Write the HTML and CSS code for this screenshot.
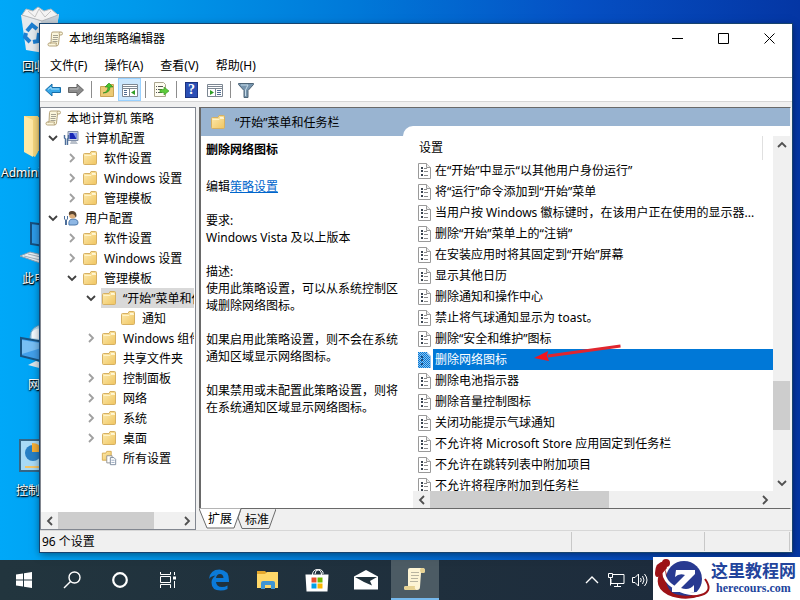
FILE: index.html
```
<!DOCTYPE html>
<html lang="zh-CN">
<head>
  <meta charset="UTF-8">
  <meta name="viewport" content="width=device-width, initial-scale=1.0">
  <title>本地组策略编辑器</title>
  <link rel="stylesheet" href="styles.css">
</head>
<body>

  <!-- Shared icons -->
  <svg class="sprite" aria-hidden="true">
    <defs>
      <linearGradient id="gold" x1="0" y1="0" x2="1" y2="1">
        <stop offset="0" stop-color="#fdebb0"/>
        <stop offset="1" stop-color="#f0c560"/>
      </linearGradient>
    </defs>
    <symbol id="folder" viewBox="0 0 16 16">
      <path d="M1.500 4.500q0-1 1-1H8l1-2h4.500q1 0 1 1v11q0 1-1 1h-11q-1 0-1-1z" fill="url(#gold)" stroke="#d6b062"/>
      <path d="M10 3.500h3.500" stroke="#fff6d8"/>
      <path d="M2.500 5.500H9l1-1h4" fill="none" stroke="#fff3c8"/>
    </symbol>
    <symbol id="scroll" viewBox="0 0 16 16">
      <path d="M4.500 2.500q0-1.500 1.500-1.500h8q1.500 0 1.500 1.500T14 4h-1.500l-1 9q-.3 2-2 2h-7Q1 15 1 13.500T2.500 12H4z" fill="#fbf6dc" stroke="#b5a47c"/>
      <path d="M12.500 4q-1-1.500.5-3M2.500 12h7q-1 2 .5 3" fill="none" stroke="#b5a47c"/>
      <path d="M6 4.500h5M6 6.500h5M5.500 8.500h5M5.500 10.500h5" stroke="#a5a292"/>
    </symbol>
    <symbol id="doc" viewBox="0 0 16 16">
      <path d="M2.500.5h8l4 4v11h-12z" fill="#fff" stroke="#9a9a9a"/>
      <path d="M10.500.5v4h4" fill="#eee" stroke="#9a9a9a"/>
      <path d="M5 4h2v2H5zM5 7h2v2H5zM5 11h2v2H5z" fill="#3a4450"/>
      <path d="M8 5.500h3M8 8.500h4M8 12.500h4" stroke="#8a8a8a"/>
    </symbol>
    <symbol id="doc-selected" viewBox="0 0 16 16">
      <path d="M2 0h9l4 4v12H2z" fill="#8fc1ec"/>
      <path d="M3 1.500h8M3 3.500h9M3 5.500h11M3 7.500h11M3 9.500h11M3 11.500h11M3 13.500h11M3 15.500h11" stroke="#0078d7" stroke-dasharray="1 1"/>
      <path d="M2 .5h9M2 2.500h10M2 4.500h12M2 6.500h12M2 8.500h12M2 10.500h12M2 12.500h12M2 14.500h12" stroke="#0078d7" stroke-dasharray="1 1"/>
      <path d="M5 4h2v2H5zM5 7h2v2H5zM5 11h2v2H5z" fill="#1c4f84"/>
    </symbol>
    <symbol id="computer" viewBox="0 0 16 16">
      <path d="M5 1.500h10v9H5z" fill="#ccd5e3" stroke="#8290a8"/>
      <path d="M6.500 3h7v6h-7z" fill="#1727b5"/>
      <path d="M10 3h3.500v6z" fill="#7f95ef"/>
      <path d="M8 11h5l2 3H7z" fill="#b9c0ca"/>
      <path d="M1.500 5v3l1 1v6M5.500 5v3l-1 1v6" fill="none" stroke="#4d6f9b" stroke-width="1.400"/>
    </symbol>
    <symbol id="user" viewBox="0 0 16 16">
      <path d="M6 15q-1-6 4-6t5 4q0 2-3 2z" fill="#8eb7e4" stroke="#4c78ab"/>
      <circle cx="9.500" cy="5" r="3.500" fill="#dcae7b"/>
      <path d="M6 5Q5 1 9 1t4.500 4q0 2-1 2.500Q12 4 9 4z" fill="#5a4530"/>
      <path d="M1.500 6v3l1 1v5M4.500 6v3l-1 1v5" fill="none" stroke="#4d6f9b"/>
    </symbol>
    <symbol id="folder-docs" viewBox="0 0 18 18">
      <path d="M1.500 3.500h4l1-2h5v10h-10z" fill="url(#gold)" stroke="#d3a850"/>
      <path d="M6.500 6.500h6v8h-6z" fill="#fff" stroke="#8c8c8c"/>
      <path d="M10.500 8.500h4l2 2v6h-6z" fill="#fff" stroke="#75859b"/>
      <path d="M12 11.500h1M14 11.500h1M12 14h1M14 14h1" stroke="#41608c"/>
    </symbol>
    <symbol id="chev-right" viewBox="0 0 16 16">
      <path d="M6 4l4 4-4 4" fill="none" stroke="currentColor" stroke-width="1.800"/>
    </symbol>
    <symbol id="chev-down" viewBox="0 0 16 16">
      <path d="M4 6l4 4 4-4" fill="none" stroke="currentColor" stroke-width="1.800"/>
    </symbol>
    <symbol id="chev-left" viewBox="0 0 16 16">
      <path d="M10 4L6 8l4 4" fill="none" stroke="currentColor" stroke-width="1.800"/>
    </symbol>
    <symbol id="chev-up" viewBox="0 0 16 16">
      <path d="M4 10l4-4 4 4" fill="none" stroke="currentColor" stroke-width="1.800"/>
    </symbol>
  </svg>

  <main class="desktop">

    <!-- Desktop shortcuts -->
    <div class="shortcuts">
      <div class="shortcut">
        <svg viewBox="0 0 48 48">
          <path d="M5 9l38-1-6 37-9 2-18-3z" fill="#e4e9ed"/>
          <path d="M5 9l20 4 18-5-6 37-9 2-3-32z" fill="#c7d0d8"/>
          <path d="M6 9l4-6 7 2 5-4 6 4 7-2 7 6-16 6z" fill="#f4f4f4" stroke="#b6b9bc"/>
          <path d="M12 5l7 6 4-8 6 8 6-6" fill="none" stroke="#c4c4c4"/>
          <path d="M11 25l5-6 5 4M23 27l-1 8-5 1M14 36l-5-5 1-4" fill="none" stroke="#1c7fd2" stroke-width="4"/>
        </svg>
        <span>回收站</span>
      </div>
      <div class="shortcut">
        <svg viewBox="0 0 48 48">
          <path d="M8 4h14v36l-3 5L8 39z" fill="#f5d77e"/>
          <path d="M8 4l9 4v37l-9-5z" fill="#ffe9a6"/>
          <path d="M22 5h17v34H22z" fill="#edc867"/>
          <circle cx="33" cy="26" r="9" fill="#497a6a"/>
        </svg>
        <span>Administrator</span>
      </div>
      <div class="shortcut">
        <svg viewBox="0 0 48 48">
          <path d="M15 5l31 4v22l-31-5z" fill="#2d9be8" stroke="#174f7d" stroke-width="2"/>
          <path d="M4 38l10-4 24 6-11 6z" fill="#e9eef2" stroke="#8ba0b0"/>
          <path d="M8 38l20 5M12 36l21 5" stroke="#9fb0bd"/>
        </svg>
        <span>此电脑</span>
      </div>
      <div class="shortcut">
        <svg viewBox="0 0 48 48">
          <circle cx="26" cy="13" r="12" fill="#b9dcf0" stroke="#639fc2"/>
          <path d="M16 8q7-7 11 0l-4 7-7-1z" fill="#f2faff"/>
          <path d="M5 14l36 6v21L5 32z" fill="#429fea" stroke="#175483" stroke-width="2"/>
          <path d="M6 16l29 5L6 30z" fill="#78bff4"/>
          <path d="M12 41l8-4 15 5-8 3z" fill="#dce5eb"/>
        </svg>
        <span>网络</span>
      </div>
      <div class="shortcut">
        <svg viewBox="0 0 48 48">
          <path d="M4 10h40v31H4z" fill="#a8daf6" stroke="#356686" stroke-width="2"/>
          <circle cx="17" cy="23" r="8" fill="#267fc5"/>
          <path d="M16 22V13q9 0 10 9z" fill="#f4ae35"/>
          <path d="M9 37h18" stroke="#f3c467" stroke-width="2"/>
        </svg>
        <span>控制面板</span>
      </div>
    </div>

    <!-- Group policy editor -->
    <section class="window">
      <header class="titlebar">
        <svg class="icon"><use href="#scroll"/></svg>
        <h1>本地组策略编辑器</h1>
        <div class="window-buttons">
          <button aria-label="最小化"><svg viewBox="0 0 11 11"><path d="M0 5.500h11"/></svg></button>
          <button aria-label="最大化"><svg viewBox="0 0 11 11"><path d="M.5.5h10v10H.5z"/></svg></button>
          <button aria-label="关闭"><svg viewBox="0 0 11 11"><path d="M.5.5l10 10M10.500.5l-10 10"/></svg></button>
        </div>
      </header>

      <nav class="menubar">
        <button>文件(F)</button>
        <button>操作(A)</button>
        <button>查看(V)</button>
        <button>帮助(H)</button>
      </nav>

      <div class="toolbar">
        <button aria-label="后退">
          <svg class="icon" viewBox="0 0 16 16"><path d="M.5 8L7 2v3.500h8.500v5H7V14z" fill="#38a8e8" stroke="#176da8"/><path d="M3 7.500L6 5v2h8" fill="none" stroke="#a7ddf9"/></svg>
        </button>
        <button aria-label="前进">
          <svg class="icon" viewBox="0 0 16 16"><path d="M15.500 8L9 2v3.500H.5v5H9V14z" fill="#8b8b8b" stroke="#666"/><path d="M2 7h8V5" fill="none" stroke="#b9b9b9"/></svg>
        </button>
        <i class="sep"></i>
        <button aria-label="上一级">
          <svg class="icon" viewBox="0 0 16 16"><path d="M1.500 4.500h6l1-2h6v12h-13z" fill="#ecca75" stroke="#c9a456"/><path d="M4 11q5-1 5-6H6l4-4 4 4h-3q0 6-7 6z" fill="#45c62c" stroke="#267d1b" stroke-width=".6"/></svg>
        </button>
        <button class="pressed" aria-label="显示/隐藏控制台树">
          <svg class="icon" viewBox="0 0 16 16"><path d="M.5 2.500h15v12H.5z" fill="#fff" stroke="#7d8793"/><path d="M1 4.500h14M1 6.500h14M7.500 7v8" stroke="#7d8793"/><path d="M2 8.500h3M2 10.500h3M2 12.500h3" stroke="#506c91"/><path d="M13 8v5l-4-2.500z" fill="#2f9f27"/></svg>
        </button>
        <i class="sep"></i>
        <button aria-label="导出列表">
          <svg class="icon" viewBox="0 0 16 16"><path d="M1.500.5h9l2 2v12h-11z" fill="#fffdf0" stroke="#aaa58e"/><path d="M3 4.500h1M3 7.500h1M3 10.500h1M5 4.500h5M5 7.500h4M5 10.500h4" stroke="#555"/><path d="M7 7.500h4V5l5 4-5 4v-2.500H7z" fill="#5ccb3a" stroke="#36931f" stroke-width=".6"/></svg>
        </button>
        <i class="sep"></i>
        <button class="help" aria-label="帮助"><span>?</span></button>
        <button aria-label="显示/隐藏操作窗格">
          <svg class="icon" viewBox="0 0 16 16"><path d="M.5 2.500h15v12H.5z" fill="#fff" stroke="#7d8793"/><path d="M1 4.500h14M1 6.500h14M8.500 7v8" stroke="#7d8793"/><path d="M10 8.500h4M10 10.500h4M10 12.500h4" stroke="#506c91"/><path d="M3 8v5l4-2.500z" fill="#2f9f27"/></svg>
        </button>
        <i class="sep"></i>
        <button aria-label="筛选器">
          <svg class="icon" viewBox="0 0 16 16"><path d="M.5 1.500h15v1L10 8.500v7H6v-7L.5 2.500z" fill="#7795ae" stroke="#4e6577"/><path d="M3 3h7L7.500 8v6" fill="none" stroke="#c5dbe9"/></svg>
        </button>
      </div>

      <div class="panes">
        <!-- Console tree -->
        <aside class="tree-pane">
          <div class="tree">
            <div class="node root"><svg class="icon"><use href="#scroll"/></svg><span>本地计算机 策略</span></div>
            <ul>
              <li>
                <div class="node open"><svg class="chev"><use href="#chev-down"/></svg><svg class="icon"><use href="#computer"/></svg><span>计算机配置</span></div>
                <ul>
                  <li class="node"><svg class="chev"><use href="#chev-right"/></svg><svg class="icon"><use href="#folder"/></svg><span>软件设置</span></li>
                  <li class="node"><svg class="chev"><use href="#chev-right"/></svg><svg class="icon"><use href="#folder"/></svg><span>Windows 设置</span></li>
                  <li class="node"><svg class="chev"><use href="#chev-right"/></svg><svg class="icon"><use href="#folder"/></svg><span>管理模板</span></li>
                </ul>
              </li>
              <li>
                <div class="node open"><svg class="chev"><use href="#chev-down"/></svg><svg class="icon"><use href="#user"/></svg><span>用户配置</span></div>
                <ul>
                  <li class="node"><svg class="chev"><use href="#chev-right"/></svg><svg class="icon"><use href="#folder"/></svg><span>软件设置</span></li>
                  <li class="node"><svg class="chev"><use href="#chev-right"/></svg><svg class="icon"><use href="#folder"/></svg><span>Windows 设置</span></li>
                  <li>
                    <div class="node open"><svg class="chev"><use href="#chev-down"/></svg><svg class="icon"><use href="#folder"/></svg><span>管理模板</span></div>
                    <ul>
                      <li>
                        <div class="node open"><svg class="chev"><use href="#chev-down"/></svg><div class="mark"><svg class="icon"><use href="#folder"/></svg><span>“开始”菜单和任务栏</span></div></div>
                        <ul>
                          <li class="node"><i class="chev"></i><svg class="icon"><use href="#folder"/></svg><span>通知</span></li>
                        </ul>
                      </li>
                      <li class="node"><svg class="chev"><use href="#chev-right"/></svg><svg class="icon"><use href="#folder"/></svg><span>Windows 组件</span></li>
                      <li class="node"><i class="chev"></i><svg class="icon"><use href="#folder"/></svg><span>共享文件夹</span></li>
                      <li class="node"><svg class="chev"><use href="#chev-right"/></svg><svg class="icon"><use href="#folder"/></svg><span>控制面板</span></li>
                      <li class="node"><svg class="chev"><use href="#chev-right"/></svg><svg class="icon"><use href="#folder"/></svg><span>网络</span></li>
                      <li class="node"><svg class="chev"><use href="#chev-right"/></svg><svg class="icon"><use href="#folder"/></svg><span>系统</span></li>
                      <li class="node"><svg class="chev"><use href="#chev-right"/></svg><svg class="icon"><use href="#folder"/></svg><span>桌面</span></li>
                      <li class="node"><i class="chev"></i><svg class="icon"><use href="#folder-docs"/></svg><span>所有设置</span></li>
                    </ul>
                  </li>
                </ul>
              </li>
            </ul>
          </div>
          <div class="hscroll">
            <button aria-label="向左滚动"><svg><use href="#chev-left"/></svg></button>
            <div class="track"><div class="thumb thumb-tree"></div></div>
            <button aria-label="向右滚动"><svg><use href="#chev-right"/></svg></button>
          </div>
        </aside>

        <!-- Details -->
        <div class="detail-pane">
          <div class="detail-box">
            <div class="band">
              <div class="band-title"><svg class="icon"><use href="#folder"/></svg><span>“开始”菜单和任务栏</span></div>
              <div class="band-curve"></div>
            </div>
            <div class="detail">
              <div class="description">
                <h2>删除网络图标</h2>
                <p class="edit">编辑<a href="#">策略设置</a></p>
                <p>要求:<br>Windows Vista 及以上版本</p>
                <p>描述:<br>使用此策略设置，可以从系统控制区域删除网络图标。</p>
                <p>如果启用此策略设置，则不会在系统通知区域显示网络图标。</p>
                <p>如果禁用或未配置此策略设置，则将在系统通知区域显示网络图标。</p>
              </div>
              <div class="list-area">
                <div class="list-wrap">
                  <table class="settings">
                    <thead><tr><th>设置</th></tr></thead>
                    <tbody>
                      <tr><td><svg class="icon"><use href="#doc"/></svg><span>在“开始”中显示“以其他用户身份运行”</span></td></tr>
                      <tr><td><svg class="icon"><use href="#doc"/></svg><span>将“运行”命令添加到“开始”菜单</span></td></tr>
                      <tr><td><svg class="icon"><use href="#doc"/></svg><span>当用户按 Windows 徽标键时，在该用户正在使用的显示器...</span></td></tr>
                      <tr><td><svg class="icon"><use href="#doc"/></svg><span>删除“开始”菜单上的“注销”</span></td></tr>
                      <tr><td><svg class="icon"><use href="#doc"/></svg><span>在安装应用时将其固定到“开始”屏幕</span></td></tr>
                      <tr><td><svg class="icon"><use href="#doc"/></svg><span>显示其他日历</span></td></tr>
                      <tr><td><svg class="icon"><use href="#doc"/></svg><span>删除通知和操作中心</span></td></tr>
                      <tr><td><svg class="icon"><use href="#doc"/></svg><span>禁止将气球通知显示为 toast。</span></td></tr>
                      <tr><td><svg class="icon"><use href="#doc"/></svg><span>删除“安全和维护”图标</span></td></tr>
                      <tr class="selected"><td><svg class="icon"><use href="#doc-selected"/></svg><span>删除网络图标</span>
                        <svg class="pointer" viewBox="0 0 90 20"><path d="M88.500 3L16 13" fill="none" stroke="#e0262e" stroke-width="3"/><path d="M2 15l14-7-1 5 2 5z" fill="#f3141e"/></svg>
                      </td></tr>
                      <tr><td><svg class="icon"><use href="#doc"/></svg><span>删除电池指示器</span></td></tr>
                      <tr><td><svg class="icon"><use href="#doc"/></svg><span>删除音量控制图标</span></td></tr>
                      <tr><td><svg class="icon"><use href="#doc"/></svg><span>关闭功能提示气球通知</span></td></tr>
                      <tr><td><svg class="icon"><use href="#doc"/></svg><span>不允许将 Microsoft Store 应用固定到任务栏</span></td></tr>
                      <tr><td><svg class="icon"><use href="#doc"/></svg><span>不允许在跳转列表中附加项目</span></td></tr>
                      <tr><td><svg class="icon"><use href="#doc"/></svg><span>不允许将程序附加到任务栏</span></td></tr>
                    </tbody>
                  </table>
                </div>
                <div class="vscroll">
                  <button aria-label="向上滚动"><svg><use href="#chev-up"/></svg></button>
                  <div class="track"><div class="thumb thumb-list-y"></div></div>
                  <button aria-label="向下滚动"><svg><use href="#chev-down"/></svg></button>
                </div>
                <div class="hscroll">
                  <button aria-label="向左滚动"><svg><use href="#chev-left"/></svg></button>
                  <div class="track"><div class="thumb thumb-list-x"></div></div>
                  <button aria-label="向右滚动"><svg><use href="#chev-right"/></svg></button>
                </div>
                <div class="corner"></div>
              </div>
            </div>
          </div>
          <div class="tabs">
            <button class="tab active">
              <svg viewBox="0 0 42 20"><path d="M0 0l8 19.500h27L42 0" fill="#fff" stroke="#6b6b6b"/></svg>
              <span>扩展</span>
            </button>
            <button class="tab">
              <svg viewBox="0 0 38 20"><path d="M3 0L0 9l4 10.500h27L38 0" fill="#f0f0f0" stroke="#6b6b6b"/></svg>
              <span>标准</span>
            </button>
          </div>
        </div>
      </div>

      <footer class="statusbar">
        <span class="status-main">96 个设置</span>
        <span class="status-mid"></span>
        <span class="status-end"></span>
      </footer>
    </section>
  </main>

  <!-- Taskbar -->
  <footer class="taskbar">
    <button aria-label="开始"><svg viewBox="0 0 24 24"><path d="M4 6.500l7-1v6H4zM12 5.300l8-1.300v7.500h-8zM4 12.500h7v6l-7-1zM12 12.500h8V20l-8-1.300z" fill="#fff"/></svg></button>
    <button aria-label="搜索"><svg viewBox="0 0 24 24"><circle cx="14.500" cy="9.500" r="5.500" fill="none" stroke="#fff" stroke-width="1.400"/><path d="M10.500 13.500L4 20" stroke="#fff" stroke-width="1.400"/></svg></button>
    <button aria-label="Cortana"><svg viewBox="0 0 24 24"><circle cx="12" cy="12" r="6.800" fill="none" stroke="#fff" stroke-width="2.200"/></svg></button>
    <button aria-label="任务视图"><svg viewBox="0 0 24 24"><path d="M4.500 4v2.500h10V4M4.500 20v-3.500h10V20M4.500 8.500h10v6h-10zM18.500 4v3M18.500 13v7" fill="none" stroke="#fff"/><path d="M17 8.500h3v3h-3z" fill="#fff"/></svg></button>
    <div class="apps">
      <button aria-label="Edge"><svg viewBox="0 0 24 24"><path d="M2 11Q3 1.500 12.500 1.500 22 2 22 12.500v1.500H9q.5 5 6 5 3 0 5.500-1.500V21q-3 1.500-7 1.500-9 0-9-8 0-4 4-7-5 .5-6.500 3.500zm7-1h7.500q-.3-4-3.500-4-3.300 0-4 4z" fill="#0b7ad8"/></svg></button>
      <button aria-label="文件资源管理器"><svg viewBox="0 0 24 24"><path d="M1 3h8l2 2h11v15H1z" fill="#e5a82d"/><path d="M1 6h8l2-2h11v16H1z" fill="#ffd869"/><path d="M5 21v-6q0-2 2-2h10q2 0 2 2v6h-4v-4H9v4z" fill="#3f95d3"/></svg></button>
      <button aria-label="应用商店"><svg viewBox="0 0 24 24"><path d="M7.500 7q0-5 4.500-5.500Q16.500 2 16.500 7M10 6q0-4 4-4.500Q18.500 2 18 6" fill="none" stroke="#fff"/><path d="M.5 6.500h23l-1 17h-21z" fill="#fff"/><path d="M6.500 9.500h5v5h-5z" fill="#e74e2c"/><path d="M12.500 9.500h5v5h-5z" fill="#72b800"/><path d="M6.500 15.500h5v5h-5z" fill="#00a1e8"/><path d="M12.500 15.500h5v5h-5z" fill="#fbb600"/></svg></button>
      <button aria-label="邮件"><svg viewBox="0 0 24 24"><path d="M0 8.500L12 2l12 6.500V21.500H0z" fill="#fff"/><path d="M1 9h22l-7 4 2 4.500L10 14z" fill="#21323c"/></svg></button>
      <button class="running" aria-label="本地组策略编辑器"><svg viewBox="0 0 24 24"><path d="M5 3q0-2 2-2h13q2 0 2 2.500T20 6h-2l-1 14q0 3-3 3H3q-2 0-2-2t2-2h2z" fill="#fdf4d4"/><path d="M18 6q-2-3 0-5h2q2 0 2 2.500T20 6zM1 21q0-2 2-2h9q-1 3 2 4H3q-2 0-2-2z" fill="#e7d292"/><path d="M8 5.500h8M8 8.500h8M8 11.500h7M7 14.500h8" stroke="#b9b4a0"/></svg></button>
    </div>
    <div class="tray">
      <button aria-label="显示隐藏的图标"><svg viewBox="0 0 18 18"><path d="M3 12l6-6 6 6" fill="none" stroke="#fff" stroke-width="1.400"/></svg></button>
      <button aria-label="网络"><svg viewBox="0 0 18 18"><path d="M6 3.500h11v9H4V8M1.500 2.500h4v4h-4zM3.500 6.500v8M10.500 12.500v3M7 15.500h7" fill="none" stroke="#fff"/></svg></button>
      <button aria-label="音量"><svg viewBox="0 0 18 18"><path d="M1.500 6.500H4L7.500 3v12L4 11.500H1.500zM9.500 7q1.500 2 0 4M11.500 5q3 4 0 8M13.500 3q5 6 0 12" fill="none" stroke="#fff"/></svg></button>
    </div>
  </footer>

  <!-- Site badge -->
  <div class="badge">
    <svg viewBox="0 0 58 43">
      <path d="M12 8Q-4 28 15 38q17 7 32 1-16 0-27-12Q12 18 12 8z" fill="#9d1217"/>
      <circle cx="31" cy="22" r="18" fill="#283a91"/>
      <path d="M23 13h19v4L28 31q8 3 13-3v7H19v-4l13-13q-6-2-10 2z" fill="#fff"/>
      <path d="M12 8q-5 14 10 23 19 11 33 1" fill="none" stroke="#fff" stroke-width="3"/>
      <path d="M52 22q10 14-8 17-18 3-30-5" fill="none" stroke="#9d1217" stroke-width="2"/>
      <path d="M2 16Q2 5 12 4l2 7-7 8q-5 3-5-3z" fill="#9d1217"/>
      <circle cx="13" cy="6" r="4" fill="#9d1217"/>
    </svg>
    <div class="badge-text">
      <strong>这里教程网</strong>
      <span>herecours.com</span>
    </div>
  </div>

</body>
</html>
```
FILE: styles.css
```
* {
  box-sizing: border-box;
}
body {
  margin: 0;
  height: 100vh;
  display: flex;
  flex-direction: column;
  overflow: hidden;
  font-family: "Noto Sans", "Noto Sans CJK SC", sans-serif;
  font-size: 12px;
  line-height: 17px;
  color: #000;
}
button {
  display: flex;
  align-items: center;
  justify-content: center;
  padding: 0;
  border: 0;
  background: none;
  font: inherit;
  color: inherit;
}
ul {
  margin: 0;
  padding: 0;
  list-style: none;
}
.sprite {
  position: absolute;
  width: 0;
  height: 0;
}
.icon {
  width: 16px;
  height: 16px;
  flex: none;
}

/* Desktop */
.desktop {
  flex: 1;
  min-height: 0;
  display: grid;
  background: linear-gradient(90deg, #00a8f8 0%, #0098ea 18%, #0078d8 45%, #0550c4 72%, #0436a4 100%);
}
.shortcuts {
  grid-area: 1 / 1;
  width: 80px;
  padding-top: 6px;
}
.shortcut {
  height: 106px;
  display: flex;
  flex-direction: column;
  align-items: center;
  gap: 4px;
  color: #fff;
  text-shadow: 0 1px 2px #000, 1px 1px 1px #000;
}
.shortcut svg {
  width: 48px;
  height: 48px;
}
.window {
  grid-area: 1 / 1;
  z-index: 1;
  min-height: 0;
  min-width: 0;
  margin: 24px 8px 8px 40px;
  display: flex;
  flex-direction: column;
  background: #f0f0f0;
  box-shadow: 0 0 0 1px #17436e, 0 2px 8px rgba(0, 0, 0, 0.5);
}

/* Title, menu, toolbar */
.titlebar {
  height: 29px;
  padding-left: 7px;
  display: flex;
  align-items: center;
  gap: 6px;
  background: #fff;
}
.titlebar h1 {
  margin: 0;
  flex: 1;
  font-size: 12px;
  font-weight: normal;
}
.window-buttons {
  display: flex;
}
.window-buttons button {
  width: 46px;
  height: 29px;
}
.window-buttons svg {
  width: 11px;
  height: 11px;
  fill: none;
  stroke: #000;
}
.menubar {
  height: 25px;
  padding-left: 2px;
  display: flex;
  gap: 1px;
  background: #fff;
  border-bottom: 1px solid #a9a9a9;
}
.menubar button {
  padding: 0 8px;
}
.toolbar {
  height: 24px;
  padding-left: 1px;
  display: flex;
  background: #fff;
  border-bottom: 1px solid #d6d6d6;
}
.toolbar button {
  width: 23px;
}
.toolbar .pressed {
  background: #cce8ff;
  border: 1px solid #99d1ff;
}
.sep {
  width: 1px;
  margin: 3px 3px 3px 4px;
  background: #8d8d8d;
}
.help span {
  width: 13px;
  height: 16px;
  background: #2b4fb5;
  border: 1px solid #1b3380;
  color: #fff;
  font: bold 14px/14px "Liberation Serif", serif;
}

/* Panes */
.panes {
  flex: 1;
  min-height: 0;
  padding: 5px 1px 0 0;
  display: flex;
  gap: 3px;
}
.tree-pane {
  width: 156px;
  flex: none;
  display: flex;
  flex-direction: column;
  border: 1px solid #828790;
  background: #fff;
}
.tree {
  flex: 1;
  min-height: 0;
  overflow: hidden;
  margin-right: 1px;
  padding-left: 4px;
}
.tree ul ul {
  padding-left: 19px;
}
.node {
  height: 20px;
  display: flex;
  align-items: center;
  white-space: nowrap;
}
.node .icon {
  margin-right: 6px;
}
.chev {
  width: 16px;
  height: 16px;
  margin-right: 2px;
  flex: none;
  color: #a0a0a0;
}
.open .chev {
  color: #404040;
}
.mark {
  height: 20px;
  display: flex;
  align-items: center;
  background: #d9d9d9;
}

/* Scroll bars */
.hscroll {
  height: 17px;
  display: flex;
  background: #f0f0f0;
}
.vscroll {
  width: 17px;
  display: flex;
  flex-direction: column;
  background: #f0f0f0;
}
.hscroll button, .vscroll button {
  width: 17px;
  height: 17px;
  flex: none;
  color: #505050;
}
.hscroll svg, .vscroll svg {
  width: 16px;
  height: 16px;
}
.track {
  flex: 1;
  display: flex;
}
.vscroll .track {
  flex-direction: column;
  justify-content: flex-end;
}
.thumb {
  background: #cdcdcd;
}
.thumb-tree {
  width: 80%;
}
.thumb-list-x {
  width: 55%;
}
.thumb-list-y {
  height: 49px;
  margin-bottom: 44px;
}

/* Details */
.detail-pane {
  flex: 1;
  min-width: 0;
  display: flex;
  flex-direction: column;
}
.detail-box {
  flex: 1;
  min-height: 0;
  display: flex;
  flex-direction: column;
  border: 1px solid #696969;
  border-left-width: 2px;
  border-right-color: #f0f0f0;
  background: #fff;
}
.band {
  height: 28px;
  flex: none;
  display: flex;
  background: #99b4d1;
}
.band-title {
  width: 202px;
  padding-left: 9px;
  display: flex;
  align-items: center;
  gap: 9px;
}
.band-curve {
  flex: 1;
  height: 10px;
  align-self: flex-end;
  background: #fff;
  border-top-left-radius: 10px;
}
.detail {
  flex: 1;
  min-height: 0;
  display: flex;
}
.description {
  width: 212px;
  flex: none;
  padding: 5px 12px 0 5px;
}
.description h2 {
  margin: 0 0 20px;
  font-size: 12px;
  font-weight: bold;
}
.description p {
  margin: 0 0 17px;
}
.description a {
  color: #0066cc;
}
.list-area {
  flex: 1;
  min-width: 0;
  display: grid;
  grid-template-columns: minmax(0, 1fr) 17px;
  grid-template-rows: minmax(0, 1fr) 17px;
}
.list-wrap {
  overflow: hidden;
}
.corner {
  background: #f0f0f0;
}
.settings {
  width: 100%;
  border-collapse: collapse;
}
.settings th {
  display: block;
  height: 24px;
  margin-right: 10px;
  padding: 3px 0 0 6px;
  border-right: 1px solid #e0e0e0;
  font-weight: normal;
  text-align: left;
}
.settings td {
  position: relative;
  height: 21px;
  padding: 0 0 0 3px;
  display: flex;
  align-items: center;
  gap: 1px;
  white-space: nowrap;
}
.settings td > span {
  flex: 1;
  padding-left: 2px;
  line-height: 21px;
}
.selected td > span {
  background: #0078d7;
  color: #fff;
}
.pointer {
  position: absolute;
  left: 119px;
  top: -6px;
  width: 90px;
  height: 20px;
}

/* Tabs and status */
.tabs {
  height: 20px;
  margin-bottom: 1px;
  display: flex;
}
.tab {
  position: relative;
  width: 38px;
}
.tab.active {
  z-index: 1;
  width: 42px;
  height: 21px;
  margin: -1px -3px 0 0;
}
.tab svg {
  position: absolute;
  inset: 0;
  width: 100%;
  height: 100%;
}
.tab span {
  position: relative;
}
.statusbar {
  height: 22px;
  flex: none;
  padding-right: 2px;
  display: flex;
  align-items: center;
  border-top: 1px solid #d7d7d7;
}
.statusbar span {
  height: 19px;
  padding-left: 2px;
  border-right: 1px solid #c8c8c8;
  line-height: 19px;
}
.status-main {
  flex: 1;
}
.status-mid {
  width: 133px;
}
.status-end {
  width: 85px;
}

/* Taskbar */
.taskbar {
  height: 40px;
  flex: none;
  display: flex;
  background: linear-gradient(90deg, #22353e, #1c2a3c);
}
.taskbar button {
  width: 48px;
}
.taskbar svg {
  width: 24px;
  height: 24px;
}
.apps {
  display: flex;
  gap: 1px;
  padding-left: 3px;
}
.taskbar .running {
  background: #4c5b64;
  border-bottom: 2px solid #76b9ed;
}
.tray {
  margin-left: auto;
  padding-right: 148px;
  display: flex;
}
.taskbar .tray button {
  width: 24px;
}
.tray svg {
  width: 18px;
  height: 18px;
}

/* Badge */
.badge {
  position: absolute;
  z-index: 2;
  right: 0;
  bottom: 0;
  width: 147px;
  height: 43px;
  display: flex;
  align-items: center;
  background: #fff;
  color: #22449c;
}
.badge svg {
  width: 58px;
  height: 43px;
  flex: none;
}
.badge-text {
  display: flex;
  flex-direction: column;
  align-items: center;
}
.badge strong {
  font-size: 17px;
  line-height: 18px;
}
.badge span {
  font: bold 12px/16px "Liberation Serif", serif;
}
```
